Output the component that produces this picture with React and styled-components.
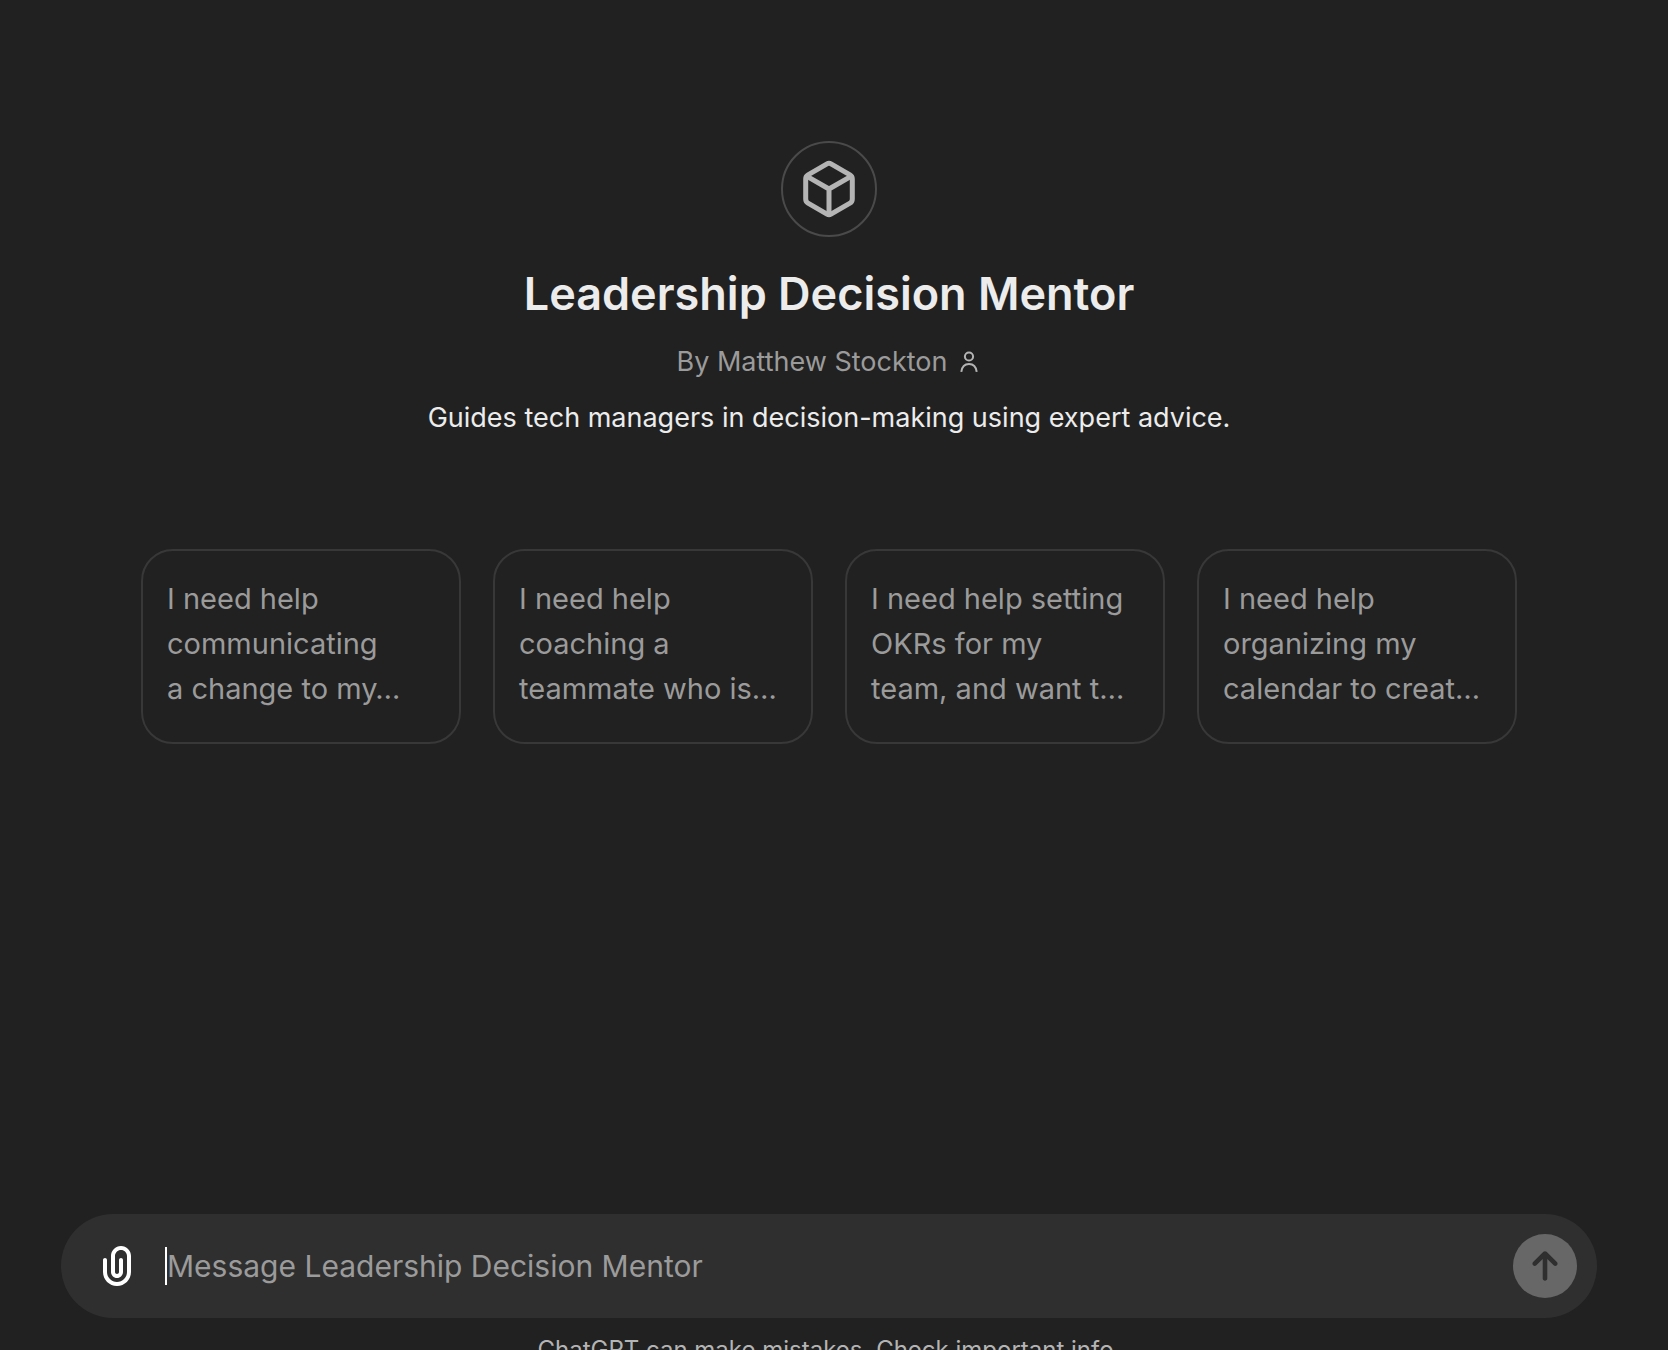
import React from 'react';
import styled, { createGlobalStyle } from 'styled-components';

const GlobalStyle = createGlobalStyle`
  *, *::before, *::after { box-sizing: border-box; }
  body {
    margin: 0;
    background: #212121;
    color: #ececec;
    font-family: Inter, "Liberation Sans", sans-serif;
    -webkit-font-smoothing: antialiased;
  }
  h1, p { margin: 0; }
  button, input { font: inherit; }
`;

const Page = styled.div`
  display: flex;
  flex-direction: column;
  height: 100vh;
  overflow: hidden;
  padding-right: 10px;
`;

const Main = styled.main`
  flex: 1;
  display: flex;
  flex-direction: column;
  align-items: center;
  padding: 141px 60px 0;
`;

const Avatar = styled.div`
  display: flex;
  align-items: center;
  justify-content: center;
  width: 96px;
  height: 96px;
  border: 2px solid #4a4a4a;
  border-radius: 50%;
  color: #b4b4b4;
`;

const Title = styled.h1`
  margin-top: 27px;
  font-size: 45px;
  line-height: 60px;
  font-weight: 600;
  text-align: center;
`;

const Byline = styled.div`
  display: flex;
  align-items: center;
  gap: 10px;
  margin-top: 18px;
  font-size: 27px;
  line-height: 40px;
  color: #9b9b9b;
  svg { color: #b4b4b4; }
`;

const Description = styled.p`
  margin-top: 16px;
  font-size: 27px;
  line-height: 40px;
  text-align: center;
`;

const Starters = styled.div`
  display: grid;
  grid-template-columns: repeat(4, 1fr);
  gap: 32px;
  width: 100%;
  max-width: 1376px;
  margin-top: 111px;
`;

const Starter = styled.button`
  padding: 25px 24px 31px;
  border: 2px solid #383838;
  border-radius: 32px;
  background: transparent;
  color: #9b9b9b;
  font-size: 29px;
  line-height: 45px;
  text-align: left;
  white-space: pre;
  overflow: hidden;
  cursor: pointer;
`;

const Footer = styled.footer`
  flex: none;
  padding: 0 61px;
`;

const Composer = styled.form`
  display: flex;
  align-items: center;
  height: 104px;
  padding: 0 20px 0 32px;
  border-radius: 52px;
  background: #2f2f2f;
`;

const IconButton = styled.button`
  display: flex;
  padding: 0;
  border: 0;
  background: transparent;
  color: #fff;
  cursor: pointer;
`;

const MessageInput = styled.input`
  flex: 1;
  min-width: 0;
  height: 38px;
  margin: 0 24px;
  padding: 0;
  border: 0;
  border-left: 2px solid #fff;
  outline: 0;
  background: transparent;
  color: #ececec;
  font-size: 30px;
  &::placeholder { color: #9b9b9b; opacity: 1; }
`;

const SendButton = styled(IconButton)`
  border-radius: 50%;
  background: #676767;
  color: #2f2f2f;
`;

const Notice = styled.p`
  height: 32px;
  padding-top: 16px;
  overflow: hidden;
  font-size: 24px;
  line-height: 32px;
  text-align: center;
  color: #b4b4b4;
`;

const CubeIcon = () => (
  <svg width="56" height="60" viewBox="0 0 56 60" fill="none" stroke="currentColor" strokeWidth="5" strokeLinejoin="round" aria-hidden="true">
    <path d="M26 4.9Q28 3.7 30 4.9L49 15.9Q51.3 17.2 51.3 20V40Q51.3 42.8 49 44.1L30 55.1Q28 56.3 26 55.1L7 44.1Q4.7 42.8 4.7 40V20Q4.7 17.2 7 15.9Z" />
    <path d="M5.6 17.2L28 30L50.4 17.2M28 30V55" />
  </svg>
);

const PersonIcon = () => (
  <svg width="24" height="24" viewBox="0 0 24 24" fill="none" stroke="currentColor" strokeWidth="2" aria-hidden="true">
    <circle cx="12" cy="6.5" r="4.1" />
    <path d="M4.3 21.8C4.9 16.9 7.8 13.9 12 13.9S19.1 16.9 19.7 21.8" />
  </svg>
);

const ClipIcon = () => (
  <svg width="48" height="48" viewBox="0 0 24 24" fill="currentColor" aria-hidden="true">
    <path d="M9 7C9 4.23858 11.2386 2 14 2C16.7614 2 19 4.23858 19 7V15C19 18.866 15.866 22 12 22C8.13401 22 5 18.866 5 15V9C5 8.44772 5.44772 8 6 8C6.55228 8 7 8.44772 7 9V15C7 17.7614 9.23858 20 12 20C14.7614 20 17 17.7614 17 15V7C17 5.34315 15.6569 4 14 4C12.3431 4 11 5.34315 11 7V15C11 15.5523 11.4477 16 12 16C12.5523 16 13 15.5523 13 15V9C13 8.44772 13.4477 8 14 8C14.5523 8 15 8.44772 15 9V15C15 16.6569 13.6569 18 12 18C10.3431 18 9 16.6569 9 15V7Z" />
  </svg>
);

const SendIcon = () => (
  <svg width="64" height="64" viewBox="0 0 32 32" fill="currentColor" aria-hidden="true">
    <path d="M15.1918 8.90615C15.6381 8.45983 16.3618 8.45983 16.8081 8.90615L21.9509 14.049C22.3972 14.4953 22.3972 15.2189 21.9509 15.6652C21.5046 16.1116 20.781 16.1116 20.3347 15.6652L17.1428 12.4734V22.2857C17.1428 22.9169 16.6311 23.4286 15.9999 23.4286C15.3688 23.4286 14.8571 22.9169 14.8571 22.2857V12.4734L11.6652 15.6652C11.2189 16.1116 10.4953 16.1116 10.049 15.6652C9.60265 15.2189 9.60265 14.4953 10.049 14.049L15.1918 8.90615Z" />
  </svg>
);

const starters = [
  'I need help\ncommunicating\na change to my…',
  'I need help\ncoaching a\nteammate who is…',
  'I need help setting\nOKRs for my\nteam, and want t…',
  'I need help\norganizing my\ncalendar to creat…',
];

export default function App() {
  return (
    <Page>
      <GlobalStyle />
      <Main>
        <Avatar><CubeIcon /></Avatar>
        <Title>Leadership Decision Mentor</Title>
        <Byline>
          <span>By Matthew Stockton</span>
          <PersonIcon />
        </Byline>
        <Description>Guides tech managers in decision-making using expert advice.</Description>
        <Starters>
          {starters.map((text) => (
            <Starter key={text} type="button">{text}</Starter>
          ))}
        </Starters>
      </Main>
      <Footer>
        <Composer onSubmit={(e) => e.preventDefault()}>
          <IconButton type="button" aria-label="Attach files"><ClipIcon /></IconButton>
          <MessageInput
            type="text"
            aria-label="Message Leadership Decision Mentor"
            placeholder="Message Leadership Decision Mentor"
          />
          <SendButton type="submit" aria-label="Send message"><SendIcon /></SendButton>
        </Composer>
        <Notice>ChatGPT can make mistakes. Check important info.</Notice>
      </Footer>
    </Page>
  );
}
